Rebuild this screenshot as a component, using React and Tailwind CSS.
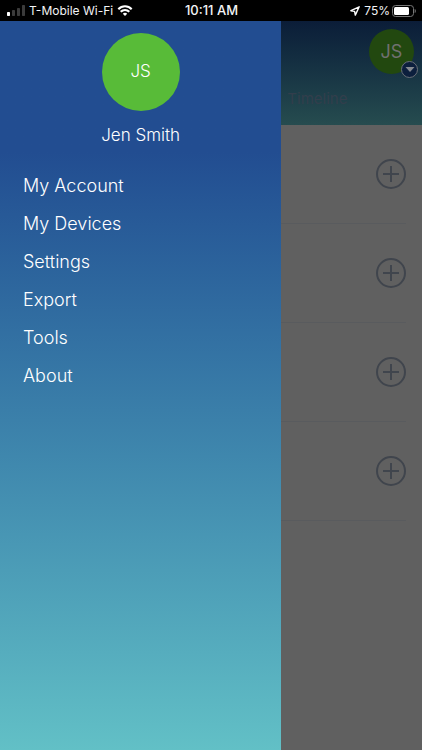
import React from 'react';

const menuItems = ['My Account', 'My Devices', 'Settings', 'Export', 'Tools', 'About'];
const timelineRows = [1, 2, 3, 4];

const StatusBar = () => {
    return (
        <div className="grid h-[21px] shrink-0 grid-cols-3 items-center bg-black pr-1.5 pl-[7px] text-xs text-gray-100">
            <div className="flex items-center whitespace-nowrap">
                <svg width="18" height="11" viewBox="0 0 18 11" aria-label="Signal">
                    <rect x="0" y="7" width="3" height="4" rx="0.7" fill="#fff" />
                    <rect x="5" y="5" width="3" height="6" rx="0.7" fill="#3b3b3b" />
                    <rect x="10" y="3" width="3" height="8" rx="0.7" fill="#3b3b3b" />
                    <rect x="15" y="0" width="3" height="11" rx="0.7" fill="#3b3b3b" />
                </svg>
                <span className="ml-1">T-Mobile Wi-Fi</span>
                <svg className="ml-1 shrink-0" width="16" height="11" viewBox="0 0 15 11" fill="none" stroke="#fff" strokeWidth="2.1" aria-label="Wi-Fi">
                    <path d="M0.8 4.2C4.6 0.3 10.4 0.3 14.2 4.2" />
                    <path d="M3.2 6.8C5.6 4.3 9.4 4.3 11.8 6.8" />
                    <path d="M7.5 11L5.3 8.7C6.5 7.5 8.5 7.5 9.7 8.7Z" fill="#fff" stroke="none" />
                </svg>
            </div>
            <span className="text-center text-[13px] font-medium">10:11 AM</span>
            <div className="flex items-center justify-end">
                <svg width="10" height="10" viewBox="0 0 10 10" fill="none" stroke="#fff" strokeWidth="1.4" strokeLinejoin="round" aria-label="Location">
                    <path d="M9.2 0.8L0.9 4.7L4.6 5.4L5.3 9.1Z" />
                </svg>
                <span className="ml-1">75%</span>
                <svg className="ml-0.5" width="24" height="12" viewBox="0 0 24 12" aria-label="Battery">
                    <rect x="0.5" y="0.5" width="21" height="11" rx="3" fill="none" stroke="#777" />
                    <rect x="2" y="2" width="15" height="8" rx="1.5" fill="#fff" />
                    <path d="M22.7 4V8C24.2 7.3 24.2 4.7 22.7 4Z" fill="#777" />
                </svg>
            </div>
        </div>
    );
};

const Drawer = () => {
    return (
        <aside className="flex w-2/3 flex-col bg-linear-to-b from-[#224d91] from-18% to-[#62c0c6] text-white">
            <div className="flex flex-col items-center pt-3">
                <div className="flex size-[78px] items-center justify-center rounded-full bg-[#58bb38] text-[17px] font-light">
                    JS
                </div>
                <h1 className="mt-3 text-[17px] leading-6 font-light">Jen Smith</h1>
            </div>
            <nav className="mt-5 flex flex-col items-start pl-[23px]">
                {menuItems.map((item) => (
                    <a key={item} href="#" className="text-lg leading-[38px] font-light">
                        {item}
                    </a>
                ))}
            </nav>
        </aside>
    );
};

const TimelinePage = () => {
    return (
        <main className="min-w-0 flex-1 bg-[#606060]">
            <header className="flex h-[104px] flex-col justify-between bg-linear-to-b from-[#0b1d38] to-[#264c4f] pt-2 pb-4">
                <button className="relative mr-2 flex size-[45px] items-center justify-center self-end rounded-full bg-[#22480f] text-lg text-[#707070]">
                    JS
                    <span className="absolute -right-1 -bottom-1 flex size-[17px] items-center justify-center rounded-full border border-[#6a7078] bg-[#0c1f3d]">
                        <svg width="10" height="5" viewBox="0 0 9 5" fill="#858a90">
                            <path d="M0 0H9L4.5 5Z" />
                        </svg>
                    </span>
                </button>
                <h2 className="pl-1.5 text-[15px] leading-5 text-[#323e4c]">Timeline</h2>
            </header>
            {timelineRows.map((row) => (
                <div key={row} className="mr-4 flex h-[99px] items-center justify-end border-b border-[#595b5e]">
                    <button aria-label="Add entry">
                        <svg width="30" height="30" viewBox="0 0 30 30" fill="none" stroke="#40454d" strokeWidth="2">
                            <circle cx="15" cy="15" r="14" />
                            <path d="M15 7V23M7 15H23" />
                        </svg>
                    </button>
                </div>
            ))}
        </main>
    );
};

const App = () => {
    return (
        <div className="flex min-h-screen flex-col bg-[#606060] font-['Inter',sans-serif]">
            <StatusBar />
            <div className="flex flex-1">
                <Drawer />
                <TimelinePage />
            </div>
        </div>
    );
};

export default App;
